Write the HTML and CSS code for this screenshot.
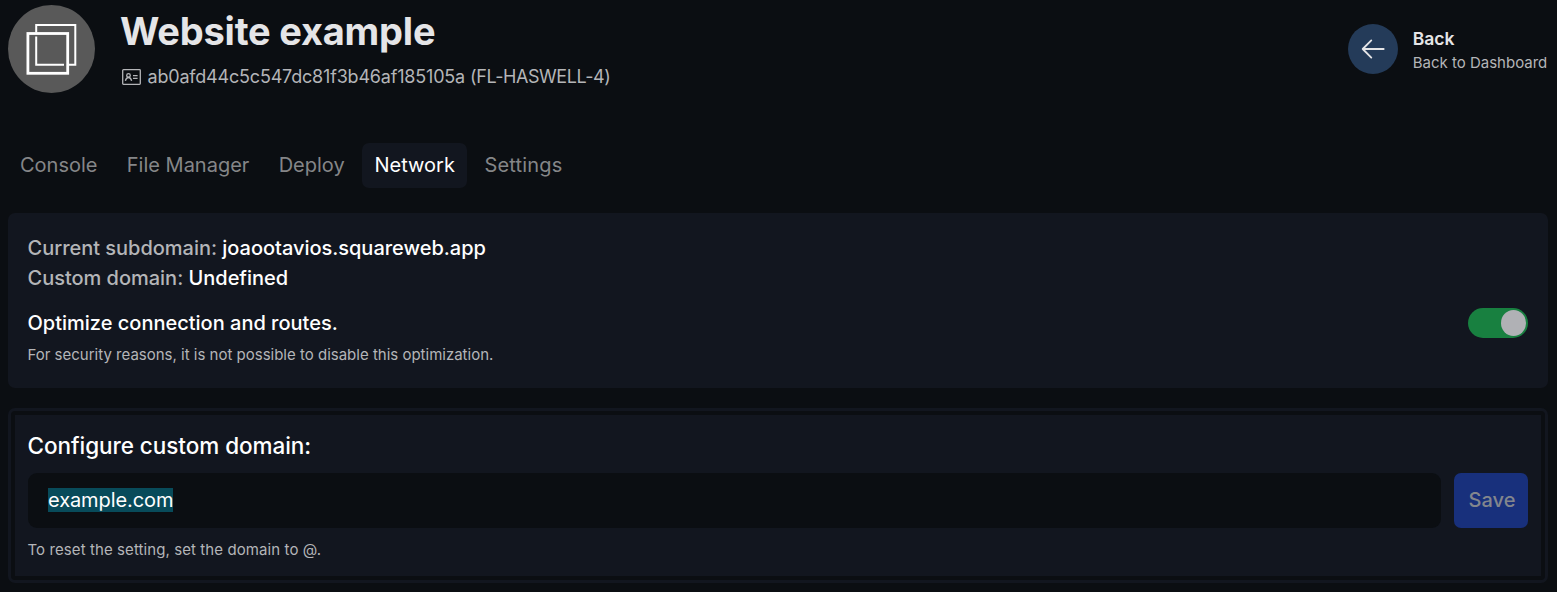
FILE: index.html
```html
<!DOCTYPE html>
<html lang="en">
<head>
<meta charset="utf-8">
<title>Website example</title>
<link rel="stylesheet" href="styles.css">
</head>
<body>
<header class="header">
  <div class="app">
    <div class="avatar">
      <svg width="52" height="52" viewBox="0 0 52 52" fill="none" stroke="#fff">
        <path d="M41 41.8H49.3V2H10.2V9.5" stroke-width="2"/>
        <path d="M10.2 13.5V41.8H38" stroke-width="2"/>
        <rect x="1.9" y="10.5" width="39.8" height="39.8" stroke-width="2.8"/>
      </svg>
    </div>
    <div class="app-info">
      <h1 class="title">Website example</h1>
      <p class="app-id">
        <svg class="id-icon" width="19" height="16" viewBox="0 0 19 16" fill="none" stroke="currentColor" stroke-width="1.3">
          <rect x=".7" y=".7" width="17.6" height="14.6" rx=".8"/>
          <circle cx="6.5" cy="6.4" r="1.8"/>
          <path d="M3.4 11.8C3.9 9.5 5 8.5 6.5 8.5S9.1 9.5 9.6 11.8M11 6.6H15.6M11 9.4H15.6"/>
        </svg>
        <span><span class="hash">ab0afd44c5c547dc81f3b46af185105a</span> <span class="node">(FL-HASWELL-4)</span></span>
      </p>
    </div>
  </div>
  <a class="back">
    <span class="back-circle">
      <svg width="24" height="20" viewBox="0 0 24 20" fill="none" stroke="#e5e5e7" stroke-width="1.8" stroke-linecap="round" stroke-linejoin="round">
        <path d="M10.3 1.4 1.7 10l8.6 8.6M1.7 10H22.7"/>
      </svg>
    </span>
    <span class="back-text"><strong>Back</strong><small>Back to Dashboard</small></span>
  </a>
</header>
<nav class="tabs">
  <a class="tab">Console</a>
  <a class="tab">File Manager</a>
  <a class="tab">Deploy</a>
  <a class="tab active">Network</a>
  <a class="tab">Settings</a>
</nav>
<section class="card">
  <div class="domains">
    <p>Current subdomain: <b>joaootavios.squareweb.app</b></p>
    <p>Custom domain: <b>Undefined</b></p>
  </div>
  <div class="option">
    <h2 class="option-title">Optimize connection and routes.</h2>
    <span class="switch"><span class="knob"></span></span>
  </div>
  <p class="hint">For security reasons, it is not possible to disable this optimization.</p>
</section>
<section class="ring">
  <div class="custom">
    <h2 class="custom-title">Configure custom domain:</h2>
    <div class="form">
      <div class="field"><span class="selected">example.com</span></div>
      <button class="save">Save</button>
    </div>
    <p class="hint">To reset the setting, set the domain to @.</p>
  </div>
</section>
</body>
</html>
```
FILE: styles.css
```css
* { box-sizing: border-box; margin: 0; padding: 0; }
body {
  height: 592px;
  padding: 5px 9px 0 8px;
  overflow: hidden;
  background: #0b0e12;
  color: #fff;
  font-family: Inter, "Liberation Sans", sans-serif;
  font-size: 20px;
}
.header { display: flex; justify-content: space-between; height: 88px; }
.app { display: flex; gap: 25px; }
.avatar {
  display: flex;
  align-items: center;
  justify-content: center;
  width: 87px;
  height: 88px;
  border-radius: 50%;
  background: #595959;
}
.title { height: 52px; font-size: 38px; line-height: 52px; font-weight: 700; letter-spacing: -.2px; color: #e5e5e7; white-space: nowrap; }
.app-id { display: flex; align-items: center; gap: 6.5px; height: 39px; font-size: 18px; color: #b4b5b8; white-space: nowrap; }
.hash { letter-spacing: -.19px; }
.node { letter-spacing: -.45px; }
.id-icon { margin-left: 2px; }
.back { display: flex; gap: 15px; padding: 19px .7px 0 0; }
.back-circle {
  display: flex;
  align-items: center;
  justify-content: center;
  width: 50px;
  height: 50px;
  border-radius: 50%;
  background: #243b59;
}
.back-text { display: flex; flex-direction: column; color: #b4b5b8; }
.back-text strong { font-size: 17.5px; font-weight: 600; line-height: 29px; color: #e5e5e7; }
.back-text small { font-size: 15px; line-height: 20px; white-space: nowrap; }
.tabs { display: flex; gap: 5px; height: 45px; margin-top: 50px; }
.tab { padding: 0 12.3px 0 12px; line-height: 45px; color: #858688; border-radius: 7px; }
.tab.active { padding: 0 12px 0 12.5px; color: #fff; background: #12161f; }
.tab:last-child { padding-left: 12.6px; letter-spacing: .18px; }
.card { height: 175px; margin-top: 25px; padding: 20px 20px 20px 19.5px; border-radius: 7px; background: #12161f; }
.domains { font-weight: 500; line-height: 30px; letter-spacing: -.02px; color: #b4b5b8; }
.domains b { color: #fff; font-weight: 500; }
.option { display: flex; align-items: center; justify-content: space-between; height: 30px; margin-top: 15px; }
.option-title { font-size: 20px; font-weight: 500; }
.switch { display: flex; justify-content: flex-end; width: 60px; height: 30px; padding: 2px; border-radius: 15px; background: #188040; }
.knob { width: 25px; height: 26px; border-radius: 50%; background: #b0b1b5; }
.hint { font-size: 15px; line-height: 20px; color: #b4b5b8; }
.card .hint { margin-top: 7px; }
.ring { height: 175px; margin-top: 20px; padding: 4px; border: 3px solid #12161f; border-radius: 7px; }
.custom { height: 161px; padding: 16px 13px 0; background: #12161f; }
.custom-title { margin-left: -.5px; font-size: 22.5px; font-weight: 500; line-height: 30px; letter-spacing: -.05px; }
.form { display: flex; gap: 13px; height: 55px; margin-top: 12px; }
.field { flex: 1; display: flex; align-items: center; padding: 0 20px 2px; border-radius: 9px; background: #0b0e12; }
.selected { background: #084b5a; line-height: 24px; letter-spacing: -.08px; }
.save { width: 74px; padding: 0 0 1px 2px; border: 0; border-radius: 7px; background: #18307c; color: #83868d; font: 500 20px Inter, "Liberation Sans", sans-serif; }
.custom .hint { margin: 12px 0 0 -.5px; letter-spacing: .09px; }
```
